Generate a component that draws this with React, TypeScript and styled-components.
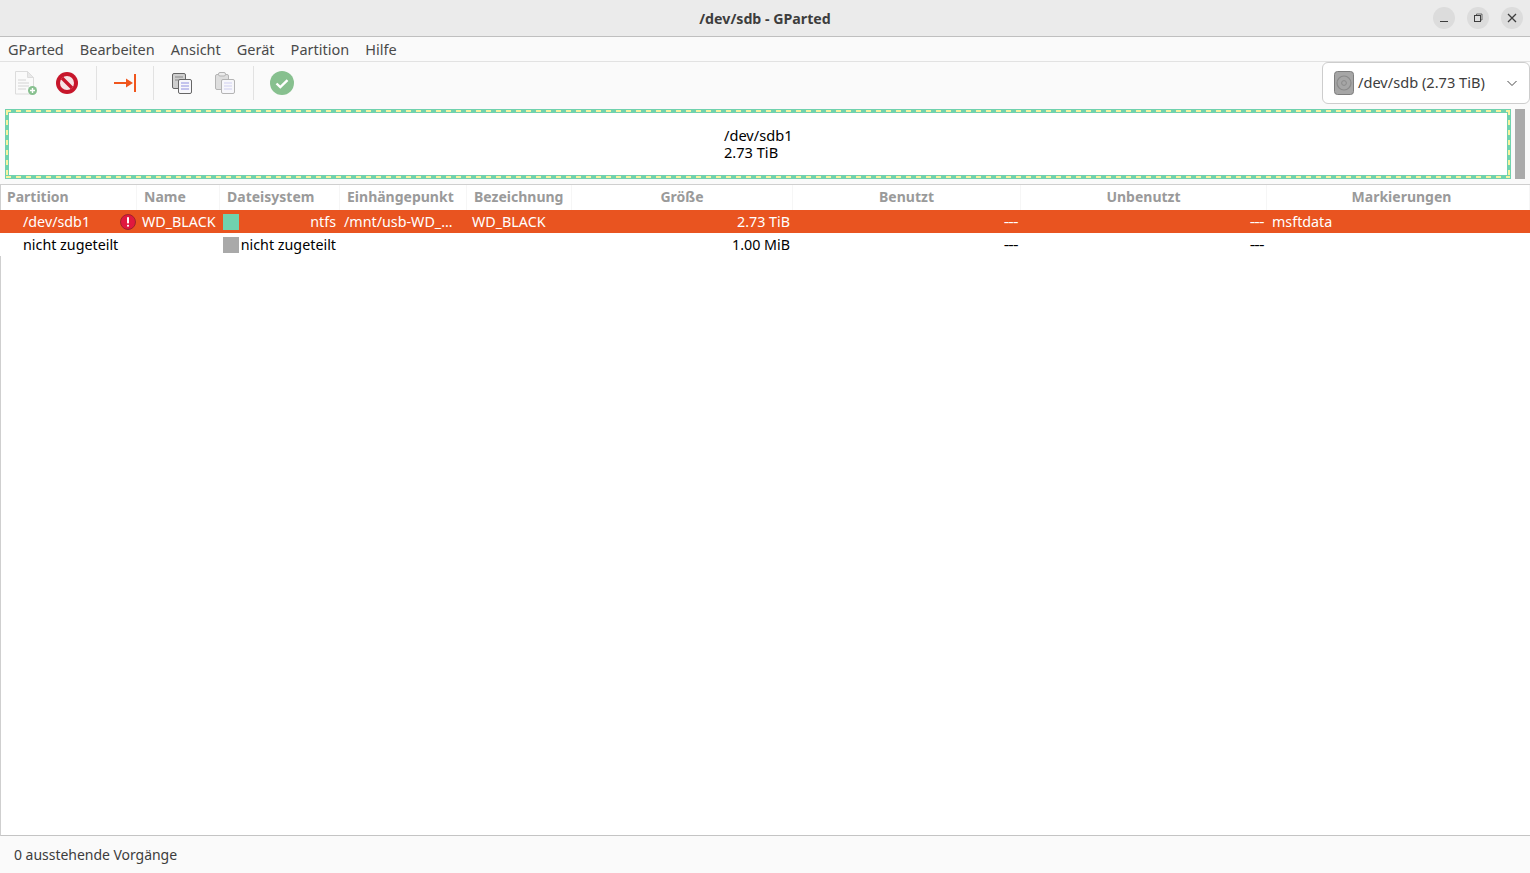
import React from 'react';
import styled, { createGlobalStyle } from 'styled-components';

const GlobalStyle = createGlobalStyle`
  html, body {
    margin: 0;
    padding: 0;
    height: 100%;
    background: #fafafa;
  }
  #root {
    height: 100%;
  }
  * {
    box-sizing: border-box;
  }
`;

const COLUMNS = '137px 83px 120px 127px 105px 221px 228px 246px 1fr';

const Window = styled.div`
  width: 1530px;
  height: 873px;
  display: flex;
  flex-direction: column;
  overflow: hidden;
  background: #fafafa;
  color: #3d3d3d;
  font-family: 'Noto Sans', 'Open Sans', sans-serif;
  font-size: 14.3px;
`;

const TitleBar = styled.header`
  height: 37px;
  flex: none;
  position: relative;
  display: flex;
  align-items: center;
  justify-content: center;
  background: #ebebeb;
  border-bottom: 1px solid #bfbfbf;
`;

const Title = styled.h1`
  margin: 0;
  font-size: 14.2px;
  font-weight: 700;
  color: #3d3d3d;
`;

const WindowButtons = styled.div`
  position: absolute;
  right: 7px;
  top: 7px;
  display: flex;
  gap: 12px;
`;

const WindowButton = styled.div`
  width: 22px;
  height: 22px;
  border-radius: 50%;
  background: #dcdcdc;
  display: flex;
  align-items: center;
  justify-content: center;
`;

const MenuBar = styled.nav`
  height: 25px;
  flex: none;
  display: flex;
  align-items: center;
  gap: 16px;
  padding-left: 8px;
  background: #fafafa;
  border-bottom: 1px solid #e2e2e2;
`;

const MenuItem = styled.span`
  color: #4a4a4a;
  font-size: 14.5px;
`;

const ToolBar = styled.div`
  height: 42px;
  flex: none;
  display: flex;
  align-items: center;
  padding-left: 14px;
  position: relative;
`;

const ToolIcon = styled.div<{ $w?: number; $l?: number }>`
  width: ${({ $w }) => $w ?? 24}px;
  height: 26px;
  margin-left: ${({ $l }) => $l ?? 0}px;
  display: flex;
  align-items: center;
  justify-content: center;
  flex: none;
`;

const Separator = styled.div<{ $l: number; $r: number }>`
  width: 1px;
  height: 34px;
  margin: 0 ${({ $r }) => $r}px 0 ${({ $l }) => $l}px;
  background: #e2e2e2;
  flex: none;
`;

const DeviceSelect = styled.div`
  position: absolute;
  top: 0;
  right: 0;
  width: 208px;
  height: 42px;
  display: flex;
  align-items: center;
  gap: 4px;
  padding: 0 11px;
  background: #fff;
  border: 1px solid #cdcdcd;
  border-radius: 6px;
  color: #3d3d3d;
`;

const DeviceLabel = styled.span`
  flex: 1;
  font-size: 14.6px;
  padding-bottom: 2px;
`;

const VisualRow = styled.div`
  height: 70px;
  flex: none;
  margin-top: 5px;
  display: flex;
  align-items: stretch;
  padding: 0 5px;
`;

const PartitionBox = styled.div`
  width: 1506px;
  flex: none;
  position: relative;
  background: #fff;
  border: 4px solid #70d2ae;
  display: flex;
  flex-direction: column;
  justify-content: center;
  padding-left: 715px;
  color: #000;
  font-size: 14.6px;
  line-height: 17px;

  &::before {
    content: '';
    position: absolute;
    inset: -3px;
    pointer-events: none;
    background:
      repeating-linear-gradient(90deg, #f7f3a0 0 5px, transparent 5px 10px) top / 100% 2px no-repeat,
      repeating-linear-gradient(90deg, #f7f3a0 0 5px, transparent 5px 10px) bottom / 100% 2px no-repeat,
      repeating-linear-gradient(180deg, #f7f3a0 0 5px, transparent 5px 10px) left / 2px 100% no-repeat,
      repeating-linear-gradient(180deg, #f7f3a0 0 5px, transparent 5px 10px) right / 2px 100% no-repeat;
  }

  & > span {
    position: relative;
  }
`;

const VisualScroll = styled.div`
  width: 10px;
  flex: none;
  margin-left: 4px;
  background: #aaaaaa;
`;

const TreeArea = styled.main`
  flex: 1;
  margin-top: 5px;
  background: #fff;
  border-top: 1px solid #cfcfcf;
  border-left: 1px solid #cfcfcf;
  border-bottom: 1px solid #c4c4c4;
  display: flex;
  flex-direction: column;
`;

const HeaderRow = styled.div`
  height: 25px;
  display: grid;
  grid-template-columns: ${COLUMNS};
  margin-left: -1px;
`;

const HeaderCell = styled.div<{ $center?: boolean; $shift?: number }>`
  display: flex;
  align-items: center;
  justify-content: ${({ $center }) => ($center ? 'center' : 'flex-start')};
  padding-left: ${({ $center, $shift }) => ($center ? ($shift ?? 0) : 7)}px;
  padding-bottom: 3px;
  border-right: 1px solid #f6f6f6;
  color: #9a9a9a;
  font-weight: 700;
  font-size: 14px;
  white-space: nowrap;
`;

const Row = styled.div<{ $selected?: boolean }>`
  height: 23px;
  display: grid;
  grid-template-columns: ${COLUMNS};
  margin-left: -1px;
  background: ${({ $selected }) => ($selected ? '#e95420' : '#fff')};
  color: ${({ $selected }) => ($selected ? '#fff' : '#000')};
`;

const Cell = styled.div<{ $right?: boolean; $pad?: number }>`
  display: flex;
  align-items: center;
  justify-content: ${({ $right }) => ($right ? 'flex-end' : 'flex-start')};
  padding: 0 ${({ $right }) => ($right ? 3 : 0)}px 0 ${({ $pad }) => $pad ?? 5}px;
  white-space: nowrap;
  overflow: hidden;
  min-width: 0;
`;

const Dash = styled.span`
  letter-spacing: -0.7px;
  margin-right: 0.7px;
  transform: scaleX(1.2);
  transform-origin: right center;
`;

const PartitionCell = styled(Cell)`
  justify-content: space-between;
  padding: 0 1px 0 23px;
`;

const FsCell = styled(Cell)`
  justify-content: space-between;
  padding: 0 4px 0 3px;
`;

const Swatch = styled.span<{ $color: string }>`
  width: 16px;
  height: 16px;
  flex: none;
  background: ${({ $color }) => $color};
`;

const StatusBar = styled.footer`
  height: 37px;
  flex: none;
  display: flex;
  align-items: center;
  padding-left: 14px;
  color: #3d3d3d;
  font-size: 14px;
  letter-spacing: -0.03px;
`;

const NewIcon = () => (
  <svg width="24" height="26" viewBox="0 0 24 26">
    <path d="M1.5 1.5h12l6 6v16.5h-18z" fill="#fafafa" stroke="#dcdcdc" />
    <path d="M13.5 1.5v6h6z" fill="#e8e8e8" stroke="#dcdcdc" />
    <path d="M4 10h8M4 13h11M4 16h11M4 19h8" stroke="#d4d4d4" />
    <circle cx="18.5" cy="20.5" r="4.5" fill="#87c08f" />
    <path d="M16 20.5h5M18.5 18v5" stroke="#fff" strokeWidth="1.4" />
  </svg>
);

const StopIcon = () => (
  <svg width="24" height="24" viewBox="0 0 24 24">
    <circle cx="12" cy="12" r="11" fill="#c7162b" />
    <circle cx="12" cy="12" r="7" fill="#f6e3e5" />
    <path d="M7 7l10 10" stroke="#c7162b" strokeWidth="3.4" />
  </svg>
);

const ApplyArrowIcon = () => (
  <svg width="24" height="24" viewBox="0 0 24 24">
    <path d="M1 12h16" stroke="#f0561d" strokeWidth="2" />
    <path d="M13 7.5l7 4.5-7 4.5z" fill="#f0561d" />
    <path d="M22 3v18" stroke="#f0561d" strokeWidth="2" />
  </svg>
);

const CopyIcon = () => (
  <svg width="22" height="24" viewBox="0 0 22 24">
    <rect x="1.5" y="2.5" width="13" height="15" rx="1.5" fill="#cfcfcf" stroke="#666" />
    <path d="M4 6h8M4 9h8" stroke="#8a8a8a" />
    <rect x="7.5" y="8.5" width="13" height="14" rx="1.5" fill="#f7f7fb" stroke="#666" />
    <path d="M10 12h8M10 15h8M10 18h8" stroke="#8f8fe0" />
  </svg>
);

const PasteIcon = () => (
  <svg width="22" height="24" viewBox="0 0 22 24">
    <rect x="1.5" y="3.5" width="13" height="15" rx="1.5" fill="#dedede" stroke="#b4b4b4" />
    <rect x="4.5" y="1.5" width="7" height="3.5" rx="1.5" fill="#ececec" stroke="#b4b4b4" />
    <rect x="7.5" y="8.5" width="13" height="14" rx="1.5" fill="#f7f7fb" stroke="#b4b4b4" />
    <path d="M10 12h8M10 15h8M10 18h8" stroke="#cfcff0" />
  </svg>
);

const CheckIcon = () => (
  <svg width="24" height="24" viewBox="0 0 24 24">
    <circle cx="12" cy="12" r="12" fill="#87c08f" />
    <path d="M6.5 12.5l3.8 3.6 7.2-7" fill="none" stroke="#fff" strokeWidth="2.4" />
  </svg>
);

const DiskIcon = () => (
  <svg width="20" height="24" viewBox="0 0 20 24">
    <rect x="0.5" y="0.5" width="19" height="23" rx="3" fill="#a6a6a6" stroke="#7d7d7d" />
    <circle cx="10" cy="12" r="7" fill="none" stroke="#8a8a8a" strokeWidth="1.2" />
    <circle cx="10" cy="12" r="2.4" fill="none" stroke="#8a8a8a" />
  </svg>
);

const ChevronIcon = () => (
  <svg width="12" height="12" viewBox="0 0 12 12">
    <path d="M1.5 4l4.5 4.5L10.5 4" fill="none" stroke="#4a4a4a" strokeWidth="1" />
  </svg>
);

const ErrorIcon = () => (
  <svg width="16" height="16" viewBox="0 0 16 16">
    <circle cx="8" cy="8" r="7.5" fill="#e0193f" stroke="#8e1f2b" strokeWidth="0.8" />
    <rect x="7" y="3" width="2" height="6.5" rx="0.8" fill="#fff" />
    <rect x="7" y="10.8" width="2" height="2" rx="0.8" fill="#fff" />
  </svg>
);

const headers: { label: string; center?: boolean; shift?: number }[] = [
  { label: 'Partition' },
  { label: 'Name' },
  { label: 'Dateisystem' },
  { label: 'Einhängepunkt' },
  { label: 'Bezeichnung' },
  { label: 'Größe', center: true },
  { label: 'Benutzt', center: true },
  { label: 'Unbenutzt', center: true },
  { label: 'Markierungen', center: true, shift: 7 },
];

export default function App() {
  return (
    <Window>
      <GlobalStyle />
      <TitleBar>
        <Title>/dev/sdb - GParted</Title>
        <WindowButtons>
          <WindowButton>
            <svg width="10" height="10" viewBox="0 0 10 10">
              <path d="M1 8.5h8" stroke="#3d3d3d" strokeWidth="1" />
            </svg>
          </WindowButton>
          <WindowButton>
            <svg width="10" height="10" viewBox="0 0 10 10">
              <rect x="1.5" y="2.5" width="6" height="6" fill="none" stroke="#3d3d3d" />
              <path d="M3.5 2.5v-1.5h5.5v6h-1.5" fill="none" stroke="#3d3d3d" strokeWidth="0.7" />
            </svg>
          </WindowButton>
          <WindowButton>
            <svg width="10" height="10" viewBox="0 0 10 10">
              <path d="M1 1l8 8M9 1l-8 8" stroke="#3d3d3d" strokeWidth="1.3" />
            </svg>
          </WindowButton>
        </WindowButtons>
      </TitleBar>

      <MenuBar>
        {['GParted', 'Bearbeiten', 'Ansicht', 'Gerät', 'Partition', 'Hilfe'].map((m) => (
          <MenuItem key={m}>{m}</MenuItem>
        ))}
      </MenuBar>

      <ToolBar>
        <ToolIcon><NewIcon /></ToolIcon>
        <ToolIcon $l={17}><StopIcon /></ToolIcon>
        <Separator $l={17} $r={16} />
        <ToolIcon><ApplyArrowIcon /></ToolIcon>
        <Separator $l={16} $r={17} />
        <ToolIcon $w={22}><CopyIcon /></ToolIcon>
        <ToolIcon $w={22} $l={21}><PasteIcon /></ToolIcon>
        <Separator $l={17} $r={16} />
        <ToolIcon><CheckIcon /></ToolIcon>
        <DeviceSelect>
          <DiskIcon />
          <DeviceLabel>/dev/sdb (2.73 TiB)</DeviceLabel>
          <ChevronIcon />
        </DeviceSelect>
      </ToolBar>

      <VisualRow>
        <PartitionBox>
          <span>/dev/sdb1</span>
          <span>2.73 TiB</span>
        </PartitionBox>
        <VisualScroll />
      </VisualRow>

      <TreeArea>
        <HeaderRow>
          {headers.map((h) => (
            <HeaderCell key={h.label} $center={h.center} $shift={h.shift}>{h.label}</HeaderCell>
          ))}
        </HeaderRow>
        <Row $selected>
          <PartitionCell>
            <span>/dev/sdb1</span>
            <ErrorIcon />
          </PartitionCell>
          <Cell>WD_BLACK</Cell>
          <FsCell>
            <Swatch $color="#70d2ae" />
            <span>ntfs</span>
          </FsCell>
          <Cell $pad={4}>/mnt/usb-WD_…</Cell>
          <Cell>WD_BLACK</Cell>
          <Cell $right>2.73 TiB</Cell>
          <Cell $right><Dash>---</Dash></Cell>
          <Cell $right><Dash>---</Dash></Cell>
          <Cell>msftdata</Cell>
        </Row>
        <Row>
          <PartitionCell>
            <span>nicht zugeteilt</span>
          </PartitionCell>
          <Cell />
          <FsCell>
            <Swatch $color="#a9a9a9" />
            <span>nicht zugeteilt</span>
          </FsCell>
          <Cell />
          <Cell />
          <Cell $right>1.00 MiB</Cell>
          <Cell $right><Dash>---</Dash></Cell>
          <Cell $right><Dash>---</Dash></Cell>
          <Cell />
        </Row>
      </TreeArea>

      <StatusBar>0 ausstehende Vorgänge</StatusBar>
    </Window>
  );
}
